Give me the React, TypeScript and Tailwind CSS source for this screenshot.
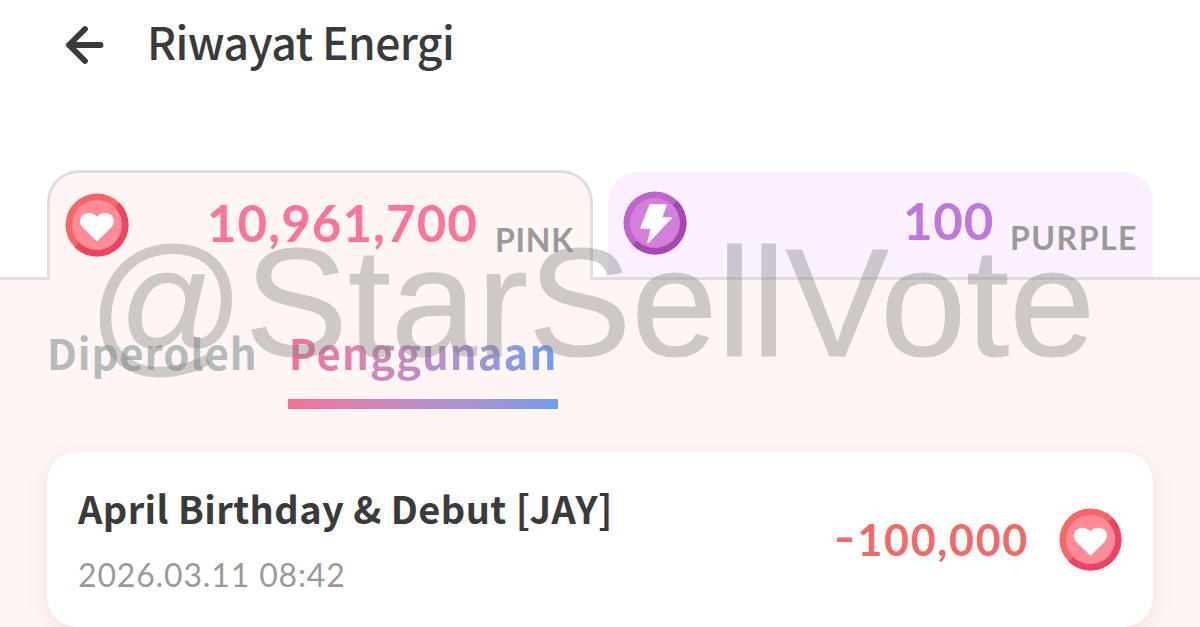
function HeartCoin({ size }: { size: number }) {
  return (
    <svg width={size} height={size} viewBox="0 0 64 64" className="block shrink-0">
      <circle cx="32" cy="32" r="31.5" fill="#fa6568" />
      <path d="M54.3 9.7A31.5 31.5 0 0 1 9.7 54.3Z" fill="#ec4363" />
      <circle cx="32" cy="32" r="25" fill="#ff8b98" />
      <path
        d="M32 48.500L18 34.800C14 30.500 14.500 24.500 18.500 21.600C22.500 19 28 19.500 32 23.500C36 19.500 41.500 19 45.500 21.600C49.500 24.500 50 30.500 46 34.800Z"
        fill="#fff"
      />
    </svg>
  );
}

function BoltCoin() {
  return (
    <svg width="64" height="64" viewBox="0 0 64 64" className="block shrink-0">
      <circle cx="32" cy="32" r="31.500" fill="#be64cb" />
      <path d="M54.300 9.700A31.500 31.500 0 0 1 9.700 54.300Z" fill="#a548b4" />
      <circle cx="32" cy="32" r="25" fill="#d280dc" />
      <path
        d="M27 14H43L38.500 27H48L25 51.500L28.500 37H18Z"
        fill="#fff"
        stroke="#fff"
        strokeWidth="1.500"
        strokeLinejoin="round"
      />
    </svg>
  );
}

export default function App() {
  return (
    <div className="relative flex h-[627px] w-[1200px] flex-col overflow-hidden bg-white font-['Noto_Sans_CJK_KR',sans-serif]">
      <header className="flex h-[90px] shrink-0 items-center pl-[65px]">
        <svg width="40" height="40" viewBox="0 0 40 40" className="block shrink-0" fill="none" stroke="#3a3a3a" strokeWidth="5.800" strokeLinecap="round" strokeLinejoin="round">
          <path d="M20 4L4 20L20 36M4 20H35.500" />
        </svg>
        <h1 className="ml-[42px] whitespace-nowrap pb-[8px] text-[44.500px] leading-[82px] font-medium tracking-[-0.600px] text-[#3a3a3a]">Riwayat Energi</h1>
      </header>

      <div className="mt-[80px] flex h-[110px] shrink-0 items-end">
        <div className="h-[3px] w-[47px] bg-[#dedede]" />
        <div className="flex h-[110px] w-[546px] items-start rounded-t-[32px] border-x-[3px] border-t-[3px] border-[#dedede] bg-[#fff5f4] pr-[16px] pl-[15px] font-['Lato',sans-serif]">
          <div className="pt-[20px]"><HeartCoin size={64} /></div>
          <div className="ml-auto flex items-baseline whitespace-nowrap">
            <span className="text-[51px] leading-[100px] font-bold tracking-[1.050px] text-[#fa7598]">10,961,700</span>
            <span className="relative top-[10px] ml-[17px] text-[32px] font-bold tracking-[0.800px] text-[#999]">PINK</span>
          </div>
        </div>
        <div className="h-[3px] w-[15px] bg-[#dedede]" />
        <div className="flex h-[108px] w-[545px] items-start rounded-t-[30px] border-b-[3px] border-[#dedede] bg-[#fbf0ff] pr-[15px] pl-[15px] font-['Lato',sans-serif]">
          <div className="pt-[19px]"><BoltCoin /></div>
          <div className="ml-auto flex items-baseline whitespace-nowrap">
            <span className="text-[51px] leading-[98px] font-bold tracking-[0.800px] text-[#bd78dd]">100</span>
            <span className="relative top-[10px] ml-[16px] text-[32px] font-bold tracking-[1.500px] text-[#999]">PURPLE</span>
          </div>
        </div>
        <div className="h-[3px] flex-1 bg-[#dedede]" />
      </div>

      <main className="flex flex-1 flex-col bg-[#fff5f4] px-[47px]">
        <nav className="flex h-[129px] shrink-0 items-start gap-[32px] text-[42px] leading-[60px] font-bold tracking-[1px]">
          <button className="mt-[42px] w-[209px] whitespace-nowrap text-left tracking-[0.850px] text-[#b5bbb8]">Diperoleh</button>
          <button className="mt-[42px] flex flex-col whitespace-nowrap">
            <span className="bg-linear-to-r from-[#f7709a] to-[#6d9ef0] bg-clip-text text-transparent">Penggunaan</span>
            <span className="mt-[17px] h-[10px] w-[270px] bg-linear-to-r from-[#f7709a] to-[#6d9ef0]" />
          </button>
        </nav>
        <section className="mt-[43px] flex h-[175px] w-[1106px] shrink-0 items-center rounded-[30px] bg-white pr-[31px] pl-[31px] shadow-[0_6px_22px_rgba(120,50,50,0.100)]">
          <div className="flex flex-col whitespace-nowrap">
            <h2 className="-mt-[3px] text-[38px] leading-[58px] font-bold tracking-[0.400px] text-[#3a3a3a]">April Birthday &amp; Debut [JAY]</h2>
            <time className="mt-[16px] font-['Lato',sans-serif] text-[32px] leading-[44px] tracking-[0.850px] text-[#9a9a9a]">2026.03.11 08:42</time>
          </div>
          <span className="ml-auto font-['Lato',sans-serif] text-[43px] leading-[60px] font-bold tracking-[1.700px] text-[#f16a6a]"><span className="inline-block origin-right -translate-y-[3px] scale-x-[1.350]">-</span>100,000</span>
          <div className="ml-[30px]"><HeartCoin size={63} /></div>
        </section>
      </main>

      <div className="pointer-events-none absolute top-[218px] left-[88px] whitespace-nowrap font-['Liberation_Sans',sans-serif] text-[154.500px] leading-[170px] text-[#808080] opacity-[0.380] [-webkit-text-stroke:1px_#808080]">@StarSellVote</div>
    </div>
  );
}
